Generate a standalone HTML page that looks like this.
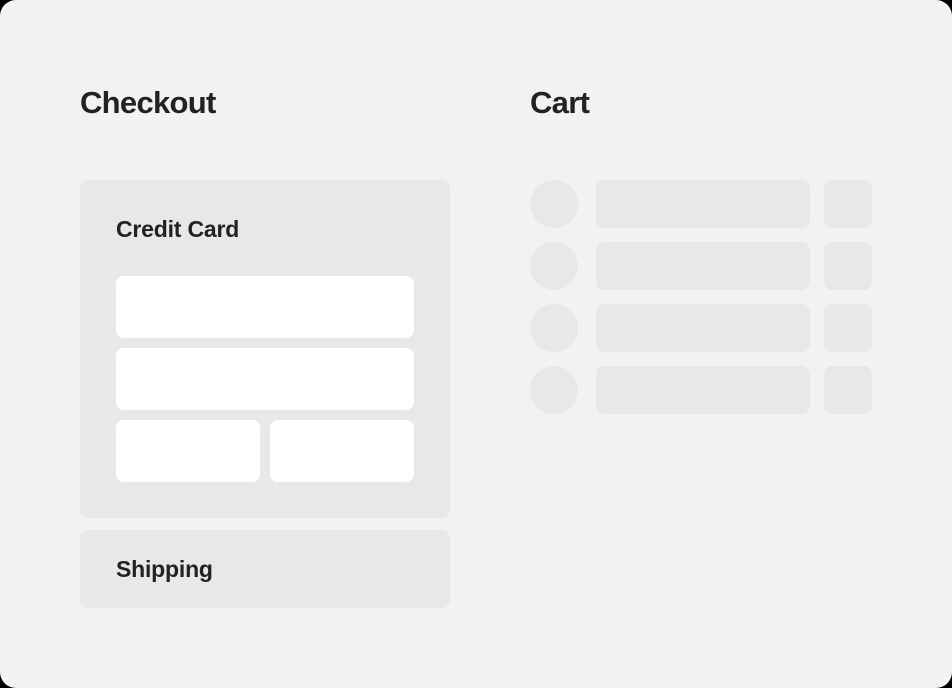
<!DOCTYPE html>
<html><head><style>
html,body{margin:0;padding:0;background:#000;}
.page{position:relative;width:952px;height:688px;background:#f3f2f0;border-radius:16px;overflow:hidden;font-family:"Liberation Sans",sans-serif;color:#222220;}
.a{position:absolute;}
h1{position:absolute;margin:0;font-size:31px;font-weight:bold;letter-spacing:-0.7px;line-height:1;}
.p{background:#e9e8e6;border-radius:8px;}
.w{background:#fff;border-radius:8px;}
.t{font-size:23px;font-weight:bold;letter-spacing:-0.2px;line-height:1;}
.c{background:#e9e8e6;border-radius:50%;}
</style></head><body><div class="page">
<h1 style="left:80px;top:87px">Checkout</h1>
<h1 style="left:530px;top:87px">Cart</h1>
<div class="a p" style="left:80px;top:180px;width:370px;height:338px"></div>
<div class="a t" style="left:116px;top:218px">Credit Card</div>
<div class="a w" style="left:116px;top:276px;width:298px;height:62px"></div>
<div class="a w" style="left:116px;top:348px;width:298px;height:62px"></div>
<div class="a w" style="left:116px;top:420px;width:144px;height:62px"></div>
<div class="a w" style="left:270px;top:420px;width:144px;height:62px"></div>
<div class="a p" style="left:80px;top:530px;width:370px;height:78px"></div>
<div class="a t" style="left:116px;top:558px">Shipping</div>

<div class="a c" style="left:530px;top:180px;width:48px;height:48px"></div>
<div class="a p" style="left:596px;top:180px;width:214px;height:48px"></div>
<div class="a p" style="left:824px;top:180px;width:48px;height:48px"></div>
<div class="a c" style="left:530px;top:242px;width:48px;height:48px"></div>
<div class="a p" style="left:596px;top:242px;width:214px;height:48px"></div>
<div class="a p" style="left:824px;top:242px;width:48px;height:48px"></div>
<div class="a c" style="left:530px;top:304px;width:48px;height:48px"></div>
<div class="a p" style="left:596px;top:304px;width:214px;height:48px"></div>
<div class="a p" style="left:824px;top:304px;width:48px;height:48px"></div>
<div class="a c" style="left:530px;top:366px;width:48px;height:48px"></div>
<div class="a p" style="left:596px;top:366px;width:214px;height:48px"></div>
<div class="a p" style="left:824px;top:366px;width:48px;height:48px"></div>
</div></body></html>
